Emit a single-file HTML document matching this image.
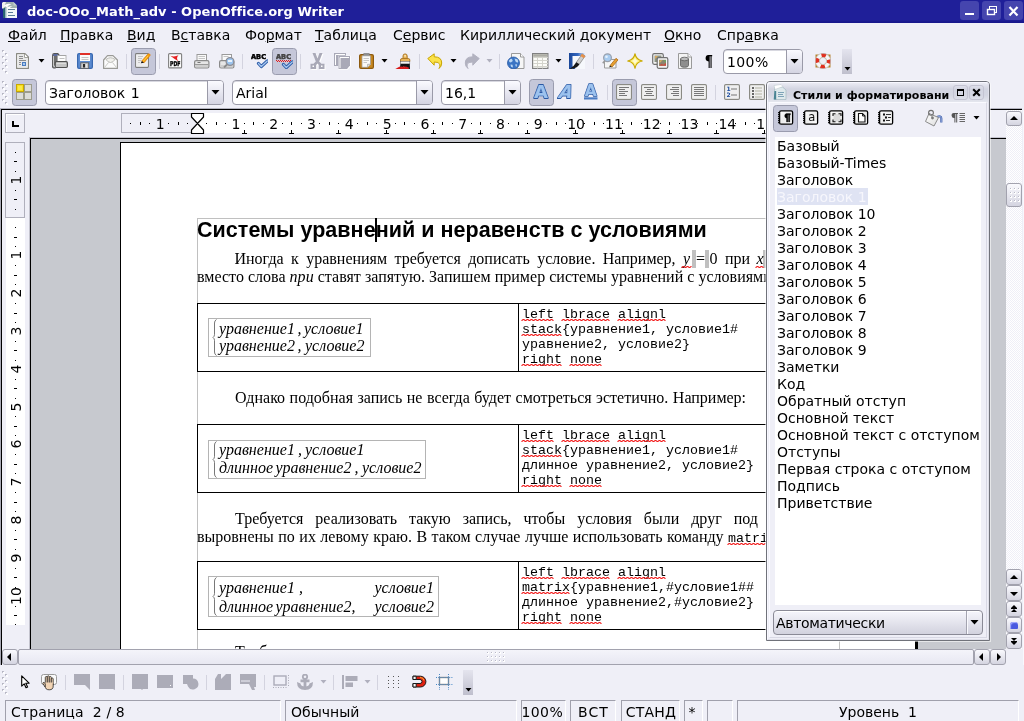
<!DOCTYPE html>
<html lang="ru"><head><meta charset="utf-8"><title>doc-OOo_Math_adv - OpenOffice.org Writer</title>
<style>
html,body{margin:0;padding:0;}
body{width:1024px;height:721px;overflow:hidden;background:#efeff7;font-family:"DejaVu Sans","Liberation Sans",sans-serif;font-size:14px;color:#000;}
#app{will-change:transform;position:relative;width:1024px;height:721px;overflow:hidden;background:#efeff7;}
.a{position:absolute;}
.t{position:absolute;white-space:pre;line-height:1;}
#titlebar{left:0;top:0;width:1024px;height:23px;background:linear-gradient(#1f1f99 0,#1f1f99 20px,#17178c 22px,#17178c 23px);}
#titlebar .ttl{left:27px;top:5px;font-weight:bold;font-size:13px;color:#fff;letter-spacing:0.03px;}
.menu{top:28px;font-size:14px;}
.menu u{text-decoration:underline;text-decoration-thickness:1px;text-underline-offset:1px;}
.sep{position:absolute;width:1px;background:#d3d3df;}
.tog{position:absolute;background:#c5c7d9;border:1px solid #9a9cae;border-radius:3.5px;box-sizing:border-box;}
.combo{position:absolute;box-sizing:border-box;border:1px solid #9a9aa8;border-radius:4px;background:#fff;overflow:hidden;box-shadow:inset 0 1px 0 #d8d8e0;}
.combo .btn{position:absolute;right:0;top:0;bottom:0;width:15px;border-left:1px solid #9a9aa8;background:linear-gradient(#fafaff,#d4d4e2);}
.combo .btn:after{content:"";position:absolute;left:3px;top:9px;width:9px;height:5px;background:#000;clip-path:polygon(.5px 0,8.5px 0,4.5px 4.6px);}
.combo .tx{position:absolute;left:3px;top:4px;font-size:14px;line-height:16px;white-space:pre;}
.dd{position:absolute;width:7px;height:4px;background:#000;clip-path:polygon(.5px 0,6.5px 0,3.5px 3.4px);}
.dd.g{background:#b0b0be;}.dds{position:absolute;width:7px;height:4px;background:#000;clip-path:polygon(.5px 0,6.5px 0,3.5px 3.4px);}
.grip{position:absolute;width:4px;background:repeating-linear-gradient(#efeff7 0 1px,#c4c4d2 1px 2px,#fff 2px 3px, #efeff7 3px 4px);}
#hr i,#vr i{position:absolute;background:#000;display:block;}
#hr b{position:absolute;top:117px;width:30px;text-align:center;font-weight:normal;font-size:14px;line-height:1;}
#vr b.v{position:absolute;left:1px;width:30px;height:30px;line-height:30px;text-align:center;font-weight:normal;font-size:14px;transform:rotate(-90deg);}
.sb{position:absolute;box-sizing:border-box;border:1px solid #a2a2ae;border-radius:3px;background:linear-gradient(#fafafe,#d4d4e0);}
.sf{position:absolute;top:700px;height:21px;box-sizing:border-box;border-top:1px solid #a0a0ac;border-left:1px solid #a0a0ac;border-right:1px solid #fff;}
.gd{position:absolute;width:1px;height:1px;background:#b4b4c2;box-shadow:1px 0 #bcbcc8,0 1px #c0c0cc,1px 1px #fff,2px 1px #fbfbff,1px 2px #fbfbff,2px 2px #fff;}
</style></head><body><div id="app">
<div id="titlebar" class="a">
<svg class="a" style="left:2px;top:2px" width="16" height="16" viewBox="0 0 16 16"><path d="M1 0h10.500L15 3.500V16H1z" fill="#9fb0b0"/><path d="M1 6h14v10H1z" fill="#f4f7f8"/><path d="M1 6h2.500v10H1z" fill="#2a6472"/><path d="M3.500 6h1v10h-1z" fill="#9cbcc4"/><path d="M0 1l1-1h3L1.500 6.500H0z" fill="#f0f0ec"/><path d="M2 3.500Q5 1 9.500 2.200 6 3 5 5.500 3.500 4 2 5z" fill="#fff"/><path d="M4 6Q7 3.500 10.500 4.500 8 5 7.500 6.500z" fill="#fff"/><path d="M11.500 0v3.500H15z" fill="#c4d0d0"/><path d="M6 7.500h7M6 10.500h5M6 13.500h7" stroke="#5a7c98" stroke-width="1"/></svg>
<div class="t ttl">doc-OOo_Math_adv - OpenOffice.org Writer</div>
<div class="a" style="left:960px;top:1px;width:19px;height:19px;background:#4545ae;border-radius:3px"><div class="a" style="left:5px;top:12px;width:9px;height:2px;background:#fff"></div></div>
<div class="a" style="left:982px;top:1px;width:19px;height:19px;background:#4545ae;border-radius:3px"><svg class="a" style="left:0;top:0" width="19" height="19"><rect x="7.5" y="5.5" width="7" height="6" fill="none" stroke="#fff" stroke-width="1"/><rect x="5.5" y="8.5" width="7" height="5" fill="#4545ae" stroke="#fff" stroke-width="1.4"/></svg></div>
<div class="a" style="left:1004px;top:1px;width:19px;height:19px;background:#4545ae;border-radius:3px"><svg class="a" style="left:0;top:0" width="19" height="19"><path d="M5.5 6l8 8.5M13.5 6l-8 8.5" stroke="#fff" stroke-width="2.2" fill="none"/></svg></div>
</div>
<div class="t menu" style="left:8px"><u>Ф</u>айл</div>
<div class="t menu" style="left:60px"><u>П</u>равка</div>
<div class="t menu" style="left:127px"><u>В</u>ид</div>
<div class="t menu" style="left:171px">В<u>с</u>тавка</div>
<div class="t menu" style="left:245px">Фо<u>р</u>мат</div>
<div class="t menu" style="left:315px"><u>Т</u>аблица</div>
<div class="t menu" style="left:393px">С<u>е</u>рвис</div>
<div class="t menu" style="left:460px">Кириллический документ</div>
<div class="t menu" style="left:664px"><u>О</u>кно</div>
<div class="t menu" style="left:717px">Спр<u>а</u>вка</div>
<div class="gd" style="left:2px;top:50px"></div><div class="gd" style="left:5px;top:53px"></div><div class="gd" style="left:2px;top:56px"></div><div class="gd" style="left:5px;top:59px"></div><div class="gd" style="left:2px;top:62px"></div><div class="gd" style="left:5px;top:65px"></div><div class="gd" style="left:2px;top:68px"></div><div class="gd" style="left:5px;top:71px"></div>
<div class="sep" style="left:126px;top:54px;height:15px"></div><div class="sep" style="left:159px;top:54px;height:15px"></div><div class="sep" style="left:242px;top:54px;height:15px"></div><div class="sep" style="left:300px;top:54px;height:15px"></div><div class="sep" style="left:419px;top:54px;height:15px"></div><div class="sep" style="left:499px;top:54px;height:15px"></div><div class="sep" style="left:593px;top:54px;height:15px"></div>
<div class="tog" style="left:131px;top:48px;width:25px;height:27px"></div><div class="tog" style="left:272px;top:48px;width:25px;height:27px"></div>
<div class="dd" style="left:38px;top:59px"></div><div class="dd" style="left:381px;top:59px"></div><div class="dd" style="left:450px;top:59px"></div><div class="dd g" style="left:486px;top:59px"></div><div class="dd" style="left:555px;top:59px"></div>
<svg class="a" style="left:16px;top:53px" width="13" height="16" viewBox="0 0 13 16"><path d="M.6.6h8.400l3.400 3.400v11.400H.6z" fill="#fff" stroke="#8a8a82" stroke-width="1.200" stroke-linejoin="round"/><path d="M2 2h6.500l2.500 3v9H2z" fill="#e9e9e9"/><path d="M8.500 1v3.500H12" fill="#fff" stroke="#9a9a92" stroke-width=".9"/><path d="M3 3.500h4M3 5.500h4M3 7.500h7M3 9.500h2M3 11.500h2" stroke="#8c8c8c"/><rect x="6.500" y="9.500" width="3" height="3" fill="#a8c8ec" stroke="#4a7cc0"/></svg>
<svg class="a" style="left:52px;top:53px" width="17" height="16" viewBox="0 0 17 16"><path d="M.7 13.500V2.200q0-1.500 1.500-1.500h3.600l1.500 1.800H13v5" fill="#6e6e6e" stroke="#555" stroke-width="1.200"/><path d="M1.300 1.300h4.200l1.200 1.500H1.300z" fill="#5a6eb0"/><path d="M1.500 3v10" stroke="#c8c8c8"/><rect x="5.500" y="2.500" width="8.500" height="6.500" fill="#fdfdfd" stroke="#a4a4a4" stroke-width=".8"/><path d="M7.500 5.500h5" stroke="#c0c0c0"/><rect x="3.200" y="8.700" width="12.200" height="5.800" rx="1.200" fill="#c4c4c4" stroke="#505050" stroke-width="1.200"/><path d="M4.500 10.200h9.500" stroke="#e8e8e8"/><path d="M.7 13v1q0 .8 1 .8h2" fill="none" stroke="#505050" stroke-width="1.200"/></svg>
<svg class="a" style="left:77px;top:53px" width="17" height="16" viewBox="0 0 17 16"><rect x=".6" y=".6" width="14.800" height="14.800" rx="1.500" fill="#5a8ad0" stroke="#3868b0" stroke-width="1.200"/><rect x="3" y="0" width="10" height="8" fill="#fafafa"/><rect x="3" y="0" width="10" height="2" fill="#e03028"/><path d="M4.500 4.500h7M4.500 6.500h7" stroke="#c4c4c4"/><rect x="3.800" y="9.800" width="7.900" height="5.700" fill="#c8c8c8" stroke="#5a5a5a" stroke-width=".8"/><rect x="6" y="11" width="2" height="3.500" fill="#2a2a2a"/><rect x="9" y="11" width="1" height="3.500" fill="#e8e8e8"/></svg>
<svg class="a" style="left:103px;top:55px" width="15" height="14" viewBox="0 0 15 14"><path d="M.6 5L4.500.6h5.500L14.400 5v8.400H.6z" fill="#fbfbfb" stroke="#9a9a96" stroke-width="1.200" stroke-linejoin="round"/><path d="M3 4.500Q7.500 1 12 4.500 10 7.500 7.500 7.500T3 4.500z" fill="#f0f0ec" stroke="#b4b4b0" stroke-width=".9"/><path d="M1.500 12.500L5.500 7.500M13.500 12.500L9.500 7.500" stroke="#c4c4c0" stroke-width=".9"/></svg>
<svg class="a" style="left:135px;top:52px" width="16" height="16" viewBox="0 0 16 16"><rect x=".6" y="1.600" width="12.800" height="13.800" rx=".8" fill="#fdfdfd" stroke="#7e7e7e" stroke-width="1.100"/><rect x="2" y="3" width="10" height="11" fill="#ededed"/><path d="M3 4.500h5M3 6.500h4M3 8.500h3M3 10.500h2" stroke="#c4c4c4"/><path d="M6.800 9L12.800 2.200q1.600-1 2.500.8L9 10.800z" fill="#f8a808" stroke="#e07808" stroke-width=".8"/><path d="M8 9.500l5-5.500" stroke="#fcd050" stroke-width=".9"/><path d="M5.800 11.200l1-2.200 2.200 1.800z" fill="#111"/></svg>
<svg class="a" style="left:168px;top:53px" width="15" height="16" viewBox="0 0 15 16"><rect x=".6" y=".6" width="13" height="14.300" rx="1" fill="#fcfcfc" stroke="#808080" stroke-width="1.100"/><path d="M2.300 2.800Q6 5.800 10.500 8.300 7.500 5.300 10.500 2.300 6.500 4.300 2.300 2.800z" fill="#e62020"/><text x="2" y="13.400" font-family="DejaVu Sans,sans-serif" font-weight="bold" font-size="6.600" textLength="10.400" lengthAdjust="spacingAndGlyphs" fill="#000" stroke="#000" stroke-width=".4">PDF</text></svg>
<svg class="a" style="left:194px;top:54px" width="16" height="15" viewBox="0 0 16 15"><rect x="3" y=".5" width="9.500" height="7" fill="#fafafa" stroke="#9a9a9a"/><path d="M4.500 2.500h6.500M4.500 4.500h6.500" stroke="#c4c4c4"/><rect x=".6" y="6.600" width="14.300" height="7.300" rx="1.500" fill="#e6e6e6" stroke="#8a8a8a" stroke-width="1.200"/><path d="M1 10.500h13.500" stroke="#9a9a9a"/><rect x="1.500" y="11" width="12.500" height="2.500" fill="#cfcfcf"/><path d="M3.500 8.500h3" stroke="#777"/></svg>
<svg class="a" style="left:219px;top:54px" width="16" height="15" viewBox="0 0 16 15"><rect x="3" y=".5" width="9.500" height="7" fill="#fafafa" stroke="#9a9a9a"/><path d="M4.500 2.500h5" stroke="#c4c4c4"/><rect x=".6" y="6.600" width="14.300" height="7.300" rx="1.500" fill="#e6e6e6" stroke="#8a8a8a" stroke-width="1.200"/><rect x="1.500" y="11" width="12.500" height="2.500" fill="#cfcfcf"/><circle cx="11" cy="7.500" r="3.900" fill="#9cc4ee" stroke="#8c8c94" stroke-width="1.300"/><rect x="9" y="6" width="4" height="2" fill="#e8f2fc"/><path d="M8 10.500l-3 3" stroke="#8a8a8a" stroke-width="1.800"/></svg>
<svg class="a" style="left:251px;top:54px" width="17" height="15" viewBox="0 0 17 15"><text x="0" y="5" font-family="DejaVu Sans,sans-serif" font-weight="bold" font-size="6.800" stroke-width=".5" stroke="#000" textLength="15" lengthAdjust="spacingAndGlyphs" fill="#000">ABC</text><path d="M7.5 9.5l2.800 3 6-5.500" fill="none" stroke="#2c5ca8" stroke-width="3.200" stroke-linecap="round" stroke-linejoin="round"/><path d="M7.5 9.5l2.800 3 6-5.500" fill="none" stroke="#a8c8f0" stroke-width="1.200" stroke-linecap="round" stroke-linejoin="round"/></svg>
<svg class="a" style="left:276px;top:54px" width="17" height="15" viewBox="0 0 17 15"><text x="0" y="5" font-family="DejaVu Sans,sans-serif" font-weight="bold" font-size="6.800" stroke-width=".5" stroke="#444" textLength="15" lengthAdjust="spacingAndGlyphs" fill="#444">ABC</text><rect x="0" y="6" width="1" height="1" fill="#e81818"/><rect x="1" y="7" width="1" height="1" fill="#e81818"/><rect x="2" y="6" width="1" height="1" fill="#e81818"/><rect x="3" y="7" width="1" height="1" fill="#e81818"/><rect x="4" y="6" width="1" height="1" fill="#e81818"/><rect x="5" y="7" width="1" height="1" fill="#e81818"/><rect x="6" y="6" width="1" height="1" fill="#e81818"/><rect x="7" y="7" width="1" height="1" fill="#e81818"/><rect x="8" y="6" width="1" height="1" fill="#e81818"/><rect x="9" y="7" width="1" height="1" fill="#e81818"/><rect x="10" y="6" width="1" height="1" fill="#e81818"/><rect x="11" y="7" width="1" height="1" fill="#e81818"/><rect x="12" y="6" width="1" height="1" fill="#e81818"/><rect x="13" y="7" width="1" height="1" fill="#e81818"/><rect x="14" y="6" width="1" height="1" fill="#e81818"/><path d="M7.5 10.5l2.800 3 6-5.500" fill="none" stroke="#2c5ca8" stroke-width="3.200" stroke-linecap="round" stroke-linejoin="round"/><path d="M7.5 10.5l2.800 3 6-5.500" fill="none" stroke="#a8c8f0" stroke-width="1.200" stroke-linecap="round" stroke-linejoin="round"/></svg>
<svg class="a" style="left:310px;top:53px" width="16" height="17" viewBox="0 0 16 17"><g transform="translate(1 1)"><path d="M2.500 0h3l2 5.500 2-5.500h3L9.200 8.500l2.300 2.200h3V16H8.800v-4L7.500 10.500 6.200 12v4H.5v-5.300h3L5.800 8.500z" fill="#fff"/></g><path d="M2.500 0h3l2 5.500 2-5.500h3L9.200 8.500l2.300 2.200h3V16H8.800v-4L7.500 10.500 6.200 12v4H.5v-5.300h3L5.800 8.500z" fill="#a9a9b7"/><rect x="2.500" y="12.500" width="1.500" height="1.500" fill="#fff"/><rect x="11" y="12.500" width="1.500" height="1.500" fill="#fff"/></svg>
<svg class="a" style="left:334px;top:53px" width="17" height="17" viewBox="0 0 17 17"><rect x="0" y="0" width="12" height="13" fill="#a9a9b7"/><path d="M1.500 12V1.500H11" fill="none" stroke="#fff" stroke-width="1"/><path d="M4.300 2.800H16.800V13l-3 3.800H4.300z" fill="#fff"/><path d="M4.500 3h11.500v9.500L13 16H4.500z" fill="#a9a9b7"/><path d="M6 15V4.500h9" fill="none" stroke="#fff" stroke-width="1"/></svg>
<svg class="a" style="left:359px;top:53px" width="15" height="16" viewBox="0 0 15 16"><rect x=".6" y="1.600" width="13.800" height="13.800" rx="1.500" fill="#c88820" stroke="#8c5a10" stroke-width="1.200"/><rect x="4.500" y=".2" width="6" height="2.800" rx="1" fill="#8e8e8e" stroke="#6a6a6a" stroke-width=".5"/><path d="M3 2.800h8.500v8.500l-3 3H3z" fill="#fafaf8" stroke="#9a9a9a" stroke-width=".7"/><path d="M11.500 11.300h-3v3" fill="#e0e0dc" stroke="#9a9a9a" stroke-width=".6"/><path d="M4.500 5.500h5.500M4.500 7.500h5.500M4.500 9.500h3.500" stroke="#c8c8c8"/></svg>
<svg class="a" style="left:395px;top:53px" width="17" height="16" viewBox="0 0 17 16"><path d="M8 5.500V3a2.100 2.100 0 1 1 4.200 0V5.500z" fill="#e8b458" stroke="#a87420" stroke-width=".9"/><circle cx="10.100" cy="2.800" r=".9" fill="#fff0c8"/><path d="M5.500 8.500V7q0-1.500 1.500-1.500h6.300q1.500 0 1.500 1.500v1.500z" fill="#e8b458" stroke="#a87420" stroke-width=".9"/><rect x="5.500" y="8.300" width="9.300" height="2.700" fill="#d8d8d4" stroke="#555" stroke-width=".5"/><rect x="6" y="8.800" width="8.300" height="1" fill="#fafafa"/><path d="M5.500 11h9.300l.2 5H4.500z" fill="#141414"/><path d="M.3 16l4-2.300h6l3.500.8V16z" fill="#d81818"/><path d="M6 13.500l1 1M8.500 13l1 1.500M11 13.500l1 1" stroke="#e84040" stroke-width=".8"/></svg>
<svg class="a" style="left:427px;top:53px" width="16" height="16" viewBox="0 0 16 16"><path d="M.8 5.500L7.200.8v3q7.500 0 7.500 6.200 0 3.500-2.700 5.500 1.400-2.200.8-4.200-.9-2.500-5.600-2.300v3.200z" fill="#fbe24a" stroke="#c8a400" stroke-width="1" stroke-linejoin="round"/></svg>
<svg class="a" style="left:464px;top:53px" width="16" height="16" viewBox="0 0 16 16"><path d="M15.200 5.500L8.800.8v3Q1.300 3.800 1.300 10q0 3.500 2.700 5.500-1.400-2.200-.8-4.200.9-2.500 5.600-2.300v3.200z" fill="#b2b2c0" stroke="#b2b2c0" stroke-width="1" stroke-linejoin="round"/></svg>
<svg class="a" style="left:507px;top:53px" width="18" height="16" viewBox="0 0 18 16"><path d="M4.500.5h9l3.500 3.500v11.500H4.500z" fill="#f6f6f6" stroke="#9a9a9a"/><path d="M13.500.5v3.500H17" fill="#fff" stroke="#9a9a9a"/><circle cx="6.500" cy="10" r="6" fill="#3a74c4" stroke="#2a5aa4" stroke-width=".8"/><path d="M2 7.500q1.500-2.500 3-1.500l.8 2-2 1.500-1.500-.5zM7.500 5.500l3 .8.800 2.500-1 1-1.800-1.300zM3.500 11.500l2 .3.500 2.700-2-.8zM8.500 11l1.500.5-.5 2.500-1-1z" fill="#bcd8f4"/></svg>
<svg class="a" style="left:532px;top:53px" width="17" height="16" viewBox="0 0 17 16"><rect x=".6" y=".6" width="15.300" height="14.800" fill="#fcfcf8" stroke="#808080" stroke-width="1.200"/><rect x="1.200" y="1.200" width="14.100" height="2.600" fill="#acaca4"/><path d="M1 4.500h15M1 7.500h15M1 10.500h15M1 13.500h15M5.500 4v11.500M10.500 4v11.500" stroke="#d4d4cc" stroke-width="1"/></svg>
<svg class="a" style="left:569px;top:53px" width="17" height="16" viewBox="0 0 17 16"><defs><linearGradient id="dg" x1="0" x2="1"><stop offset="0" stop-color="#1a4698"/><stop offset=".55" stop-color="#3468c0"/><stop offset="1" stop-color="#e8eefa"/></linearGradient></defs><rect x="0" y="0" width="16" height="16" fill="url(#dg)"/><path d="M3.500 3H16V16H3.500z" fill="#f6f8fc"/><path d="M3.500 13l3 3H3.500z" fill="#1a4698"/><path d="M13.200 1l3 2-6 8.500-3-2z" fill="#cfcfcf" stroke="#6a6a6a" stroke-width=".6"/><path d="M13 .8l3.300 2.200-1.500 2.200-3.300-2.200z" fill="#e89048"/><path d="M7.300 9.300l3 2q-1.300 4.200-9.800 4.700 4.300-2.200 6.800-6.700z" fill="#161616"/></svg>
<svg class="a" style="left:602px;top:53px" width="17" height="16" viewBox="0 0 17 16"><path d="M2.500 6.500h11.500v8.500H2.500z" fill="#f6f6f6" stroke="#9c9c9c"/><circle cx="5.500" cy="4.700" r="3.900" fill="#a8ccf0" stroke="#9aa0ac" stroke-width="1.200"/><circle cx="4.500" cy="3.700" r="1.300" fill="#e4f0fc"/><path d="M2.800 7.800L.8 10.300" stroke="#9a9a9a" stroke-width="1.600"/><path d="M8 12.500l6-7.200 2 1.600-6 7.200z" fill="#e8a030" stroke="#a86410" stroke-width=".7"/><path d="M7.200 14.300l.8-1.900 1.900 1.400z" fill="#222"/></svg>
<svg class="a" style="left:627px;top:53px" width="16" height="16" viewBox="0 0 16 16"><path d="M8 .7Q9 6.800 15.300 8 9 9.200 8 15.300 7 9.200 .7 8 7 6.800 8 .7z" fill="#fdf07a" stroke="#c8a800" stroke-width="1.100" stroke-linejoin="round"/><path d="M8 4Q8.500 7.300 11.500 8 8.500 8.700 8 12 7.500 8.700 4.500 8 7.500 7.300 8 4z" fill="#fffbd0"/></svg>
<svg class="a" style="left:652px;top:53px" width="17" height="16" viewBox="0 0 17 16"><rect x=".7" y=".7" width="10.600" height="10.600" rx="1.500" fill="#f4f4f4" stroke="#707070" stroke-width="1.200"/><rect x="2.500" y="2.500" width="7" height="6.500" fill="#8c9484"/><path d="M3 3h3l-3 3z" fill="#d8a860"/><rect x="5.200" y="4.700" width="10.600" height="10.600" rx="1.500" fill="#f4f4f4" stroke="#707070" stroke-width="1.200"/><rect x="7" y="6.800" width="7" height="6" fill="#8c8470"/><path d="M7 12.800l2.500-2 2 1 2.500-2v3z" fill="#c85040"/><path d="M7.500 7.300h3l-3 3z" fill="#d8b060"/><path d="M11 7.300h3v3z" fill="#70a060"/></svg>
<svg class="a" style="left:678px;top:53px" width="14" height="16" viewBox="0 0 14 16"><path d="M.5.500h9.500l3.500 3.500v11.500H.5z" fill="#f4f4f4" stroke="#9a9a9a"/><path d="M10 .5v3.500h3.500" fill="#fff" stroke="#9a9a9a"/><path d="M2.500 6v6.500a4 1.800 0 0 0 8 0V6z" fill="#8e8e8e" stroke="#5a5a5a" stroke-width=".8"/><ellipse cx="6.500" cy="6" rx="4" ry="1.800" fill="#bcbcbc" stroke="#5a5a5a" stroke-width=".8"/></svg>
<svg class="a" style="left:705px;top:55px" width="9" height="14" viewBox="0 0 9 14"><path d="M4 0H7.200v1.200H6.600V13H5.500V1.200H4.700V13H3.600V6.400A3.200 3.200 0 0 1 4 0z" fill="#000"/></svg>
<div class="combo" style="left:723px;top:49px;width:80px;height:25px"><div class="tx" style="top:4px;letter-spacing:.4px">100%</div><div class="btn"></div></div>
<svg class="a" style="left:815px;top:53px" width="16" height="16" viewBox="0 0 16 16"><rect x=".5" y="1.500" width="15" height="13" fill="#b07818" opacity=".9"/><circle cx="8" cy="8" r="5.700" fill="none" stroke="#f6f6f6" stroke-width="4"/><circle cx="8" cy="8" r="5.700" fill="none" stroke="#e03020" stroke-width="4" stroke-dasharray="4.480 4.480" stroke-dashoffset="2.240"/><circle cx="8" cy="8" r="7.700" fill="none" stroke="#bcbcbc" stroke-width=".7"/><circle cx="8" cy="8" r="3.600" fill="#efeff7" stroke="#bcbcbc" stroke-width=".7"/></svg>
<div class="a" style="left:842px;top:49px;width:10px;height:25px;background:linear-gradient(#e4e4ee,#bfbfcd)"><div class="dds" style="left:2px;top:18px"></div></div>
<div class="gd" style="left:2px;top:81px"></div><div class="gd" style="left:5px;top:84px"></div><div class="gd" style="left:2px;top:87px"></div><div class="gd" style="left:5px;top:90px"></div><div class="gd" style="left:2px;top:93px"></div><div class="gd" style="left:5px;top:96px"></div><div class="gd" style="left:2px;top:99px"></div><div class="gd" style="left:5px;top:102px"></div>
<div class="tog" style="left:12px;top:79px;width:25px;height:27px"></div><div class="tog" style="left:529px;top:79px;width:25px;height:27px"></div><div class="tog" style="left:612px;top:79px;width:25px;height:27px"></div>
<div class="sep" style="left:607px;top:85px;height:15px"></div><div class="sep" style="left:715px;top:85px;height:15px"></div>
<svg class="a" style="left:16px;top:84px" width="16" height="16" viewBox="0 0 16 16"><rect x=".5" y=".5" width="7" height="7" fill="#f8e020" stroke="#c8a800"/><rect x="8.500" y=".5" width="7" height="7" fill="#dcdcd8" stroke="#9c9c8c"/><rect x=".5" y="8.500" width="7" height="7" fill="#dcdcd8" stroke="#9c9c8c"/><rect x="8.500" y="8.500" width="7" height="7" fill="#dcdcd8" stroke="#9c9c8c"/><rect x="2" y="2" width="4" height="4" fill="#fbe94a"/></svg>
<div class="combo" style="left:45px;top:80px;width:179px;height:25px"><div class="tx" style="word-spacing:1px">Заголовок 1</div><div class="btn"></div></div>
<div class="combo" style="left:232px;top:80px;width:201px;height:25px"><div class="tx">Arial</div><div class="btn"></div></div>
<div class="combo" style="left:441px;top:80px;width:80px;height:25px"><div class="tx">16,1</div><div class="btn"></div></div>
<svg class="a" style="left:532px;top:84px" width="18" height="16" viewBox="0 0 18 16"><text x="9" y="13.600" font-family="DejaVu Sans,sans-serif" font-weight="bold" font-size="18" text-anchor="middle" fill="#2a58a4" stroke="#2a58a4" stroke-width="1.800" stroke-linejoin="round" >A</text><text x="9" y="13.600" font-family="DejaVu Sans,sans-serif" font-weight="bold" font-size="18" text-anchor="middle" fill="#9cc2ee" stroke="#9cc2ee" stroke-width=".2" >A</text></svg>
<svg class="a" style="left:557px;top:84px" width="18" height="16" viewBox="0 0 18 16"><text x="7.5" y="13.600" font-family="DejaVu Sans,sans-serif" font-weight="bold" font-size="18" text-anchor="middle" fill="#2a58a4" stroke="#2a58a4" stroke-width="1.800" stroke-linejoin="round" transform="skewX(-20) translate(5 0) scale(.92 1)">A</text><text x="7.5" y="13.600" font-family="DejaVu Sans,sans-serif" font-weight="bold" font-size="18" text-anchor="middle" fill="#9cc2ee" stroke="#9cc2ee" stroke-width=".2" transform="skewX(-20) translate(5 0) scale(.92 1)">A</text></svg>
<svg class="a" style="left:582px;top:83px" width="18" height="17" viewBox="0 0 18 17"><g transform="scale(.86 .9) translate(1.300 .5)"><text x="9" y="13.600" font-family="DejaVu Sans,sans-serif" font-weight="bold" font-size="18" text-anchor="middle" fill="#2a58a4" stroke="#2a58a4" stroke-width="1.800" stroke-linejoin="round" >A</text><text x="9" y="13.600" font-family="DejaVu Sans,sans-serif" font-weight="bold" font-size="18" text-anchor="middle" fill="#9cc2ee" stroke="#9cc2ee" stroke-width=".2" >A</text></g><rect x="2" y="14.300" width="13.500" height="2.200" fill="#4a7cc4"/></svg>
<svg class="a" style="left:616px;top:84px" width="16" height="16" viewBox="0 0 16 16"><rect x=".6" y=".6" width="14.800" height="14.800" rx="1.200" fill="#fff" stroke="#8a8a84" stroke-width="1.200"/><rect x="2" y="2" width="12" height="12" fill="#efefef"/><rect x="3" y="3" width="10" height="1" fill="#777"/><rect x="3" y="5" width="6" height="1" fill="#777"/><rect x="3" y="7" width="9" height="1" fill="#777"/><rect x="3" y="9" width="6" height="1" fill="#777"/><rect x="3" y="11" width="8" height="1" fill="#777"/></svg>
<svg class="a" style="left:641px;top:84px" width="16" height="16" viewBox="0 0 16 16"><rect x=".6" y=".6" width="14.800" height="14.800" rx="1.200" fill="#fff" stroke="#8a8a84" stroke-width="1.200"/><rect x="2" y="2" width="12" height="12" fill="#efefef"/><rect x="3" y="3" width="10" height="1" fill="#777"/><rect x="6" y="5" width="4" height="1" fill="#777"/><rect x="4" y="7" width="8" height="1" fill="#777"/><rect x="5" y="9" width="6" height="1" fill="#777"/><rect x="3" y="11" width="10" height="1" fill="#777"/></svg>
<svg class="a" style="left:666px;top:84px" width="16" height="16" viewBox="0 0 16 16"><rect x=".6" y=".6" width="14.800" height="14.800" rx="1.200" fill="#fff" stroke="#8a8a84" stroke-width="1.200"/><rect x="2" y="2" width="12" height="12" fill="#efefef"/><rect x="6" y="3" width="7" height="1" fill="#777"/><rect x="4" y="5" width="9" height="1" fill="#777"/><rect x="7" y="7" width="6" height="1" fill="#777"/><rect x="5" y="9" width="8" height="1" fill="#777"/><rect x="7" y="11" width="6" height="1" fill="#777"/></svg>
<svg class="a" style="left:691px;top:84px" width="16" height="16" viewBox="0 0 16 16"><rect x=".6" y=".6" width="14.800" height="14.800" rx="1.200" fill="#fff" stroke="#8a8a84" stroke-width="1.200"/><rect x="2" y="2" width="12" height="12" fill="#efefef"/><rect x="3" y="3" width="10" height="1" fill="#777"/><rect x="3" y="5" width="10" height="1" fill="#777"/><rect x="3" y="7" width="10" height="1" fill="#777"/><rect x="3" y="9" width="10" height="1" fill="#777"/><rect x="3" y="11" width="10" height="1" fill="#777"/></svg>
<svg class="a" style="left:724px;top:84px" width="16" height="16" viewBox="0 0 16 16"><rect x=".6" y=".6" width="14.800" height="14.800" rx="1.200" fill="#fafafa" stroke="#8a8a84" stroke-width="1.200"/><rect x="2" y="2" width="12" height="12" fill="#efefef"/><text x="2.500" y="7.400" font-family="DejaVu Sans,sans-serif" font-weight="bold" font-size="6" fill="#1c4ca0">1</text><text x="2.500" y="13.400" font-family="DejaVu Sans,sans-serif" font-weight="bold" font-size="6" fill="#1c4ca0">2</text><rect x="7" y="4.500" width="6" height="1" fill="#777"/><rect x="7" y="10.500" width="6" height="1" fill="#777"/></svg>
<svg class="a" style="left:749px;top:84px" width="16" height="16" viewBox="0 0 16 16"><rect x=".6" y=".6" width="14.800" height="14.800" rx="1.200" fill="#fafafa" stroke="#8a8a84" stroke-width="1.200"/><rect x="2" y="2" width="12" height="12" fill="#efefef"/><rect x="3" y="3" width="2" height="2" fill="#666"/><rect x="6" y="3.5" width="7" height="1" fill="#b4b4a4"/><rect x="3" y="6" width="2" height="2" fill="#666"/><rect x="6" y="6.5" width="7" height="1" fill="#b4b4a4"/><rect x="3" y="9" width="2" height="2" fill="#666"/><rect x="6" y="9.5" width="7" height="1" fill="#b4b4a4"/><rect x="3" y="12" width="2" height="2" fill="#666"/><rect x="6" y="12.5" width="7" height="1" fill="#b4b4a4"/></svg>
<div class="a" style="left:0;top:108px;width:1022px;height:1px;background:#b4b4c0"></div><div class="a" style="left:0;top:109px;width:1px;height:556px;background:#a9a9b5"></div><div class="a" style="left:1px;top:109px;width:1021px;height:1px;background:#000"></div><div class="a" style="left:1px;top:109px;width:1px;height:556px;background:#000"></div>
<div class="a" style="left:5px;top:113px;width:20px;height:20px;box-sizing:border-box;border:1px solid #b0b0bc;box-shadow:inset 1px 1px 0 #fff"><div class="a" style="left:6px;top:7px;width:2px;height:6px;background:#000"></div><div class="a" style="left:6px;top:11px;width:7px;height:2px;background:#000"></div></div>
<div class="a" style="left:197px;top:113px;width:643px;height:20px;background:#fff"></div><div class="a" style="left:121px;top:113px;width:77px;height:20px;box-sizing:border-box;border:1px solid #b0b0bc;border-right:0;background:#efeff7"></div>
<div id="hr" class="a" style="left:0;top:0"><i style="left:130px;top:123px;width:1px;height:1px"></i><i style="left:140px;top:122px;width:1px;height:3px"></i><i style="left:149px;top:123px;width:1px;height:1px"></i><b style="left:145.3px">1</b><i style="left:168px;top:123px;width:1px;height:1px"></i><i style="left:178px;top:122px;width:1px;height:3px"></i><i style="left:187px;top:123px;width:1px;height:1px"></i><i style="left:206px;top:123px;width:1px;height:1px"></i><i style="left:216px;top:122px;width:1px;height:3px"></i><i style="left:225px;top:123px;width:1px;height:1px"></i><b style="left:220.9px">1</b><i style="left:244px;top:123px;width:1px;height:1px"></i><i style="left:253px;top:122px;width:1px;height:3px"></i><i style="left:263px;top:123px;width:1px;height:1px"></i><b style="left:258.7px">2</b><i style="left:282px;top:123px;width:1px;height:1px"></i><i style="left:291px;top:122px;width:1px;height:3px"></i><i style="left:301px;top:123px;width:1px;height:1px"></i><b style="left:296.5px">3</b><i style="left:319px;top:123px;width:1px;height:1px"></i><i style="left:329px;top:122px;width:1px;height:3px"></i><i style="left:338px;top:123px;width:1px;height:1px"></i><b style="left:334.3px">4</b><i style="left:357px;top:123px;width:1px;height:1px"></i><i style="left:367px;top:122px;width:1px;height:3px"></i><i style="left:376px;top:123px;width:1px;height:1px"></i><b style="left:372.1px">5</b><i style="left:395px;top:123px;width:1px;height:1px"></i><i style="left:404px;top:122px;width:1px;height:3px"></i><i style="left:414px;top:123px;width:1px;height:1px"></i><b style="left:409.9px">6</b><i style="left:433px;top:123px;width:1px;height:1px"></i><i style="left:442px;top:122px;width:1px;height:3px"></i><i style="left:452px;top:123px;width:1px;height:1px"></i><b style="left:447.7px">7</b><i style="left:471px;top:123px;width:1px;height:1px"></i><i style="left:480px;top:122px;width:1px;height:3px"></i><i style="left:490px;top:123px;width:1px;height:1px"></i><b style="left:485.5px">8</b><i style="left:508px;top:123px;width:1px;height:1px"></i><i style="left:518px;top:122px;width:1px;height:3px"></i><i style="left:527px;top:123px;width:1px;height:1px"></i><b style="left:523.3px">9</b><i style="left:546px;top:123px;width:1px;height:1px"></i><i style="left:556px;top:122px;width:1px;height:3px"></i><i style="left:565px;top:123px;width:1px;height:1px"></i><b style="left:561.1px">10</b><i style="left:584px;top:123px;width:1px;height:1px"></i><i style="left:594px;top:122px;width:1px;height:3px"></i><i style="left:603px;top:123px;width:1px;height:1px"></i><b style="left:598.9px">11</b><i style="left:622px;top:123px;width:1px;height:1px"></i><i style="left:631px;top:122px;width:1px;height:3px"></i><i style="left:641px;top:123px;width:1px;height:1px"></i><b style="left:636.7px">12</b><i style="left:660px;top:123px;width:1px;height:1px"></i><i style="left:669px;top:122px;width:1px;height:3px"></i><i style="left:679px;top:123px;width:1px;height:1px"></i><b style="left:674.5px">13</b><i style="left:697px;top:123px;width:1px;height:1px"></i><i style="left:707px;top:122px;width:1px;height:3px"></i><i style="left:716px;top:123px;width:1px;height:1px"></i><b style="left:712.3px">14</b><i style="left:735px;top:123px;width:1px;height:1px"></i><i style="left:745px;top:122px;width:1px;height:3px"></i><i style="left:754px;top:123px;width:1px;height:1px"></i><b style="left:750.1px">15</b><i style="left:244px;top:130px;width:1px;height:3px"></i><i style="left:242px;top:133px;width:5px;height:1px"></i><i style="left:291px;top:130px;width:1px;height:3px"></i><i style="left:289px;top:133px;width:5px;height:1px"></i><i style="left:338px;top:130px;width:1px;height:3px"></i><i style="left:336px;top:133px;width:5px;height:1px"></i><i style="left:386px;top:130px;width:1px;height:3px"></i><i style="left:384px;top:133px;width:5px;height:1px"></i><i style="left:433px;top:130px;width:1px;height:3px"></i><i style="left:431px;top:133px;width:5px;height:1px"></i><i style="left:480px;top:130px;width:1px;height:3px"></i><i style="left:478px;top:133px;width:5px;height:1px"></i><i style="left:527px;top:130px;width:1px;height:3px"></i><i style="left:525px;top:133px;width:5px;height:1px"></i><i style="left:575px;top:130px;width:1px;height:3px"></i><i style="left:573px;top:133px;width:5px;height:1px"></i><i style="left:622px;top:130px;width:1px;height:3px"></i><i style="left:620px;top:133px;width:5px;height:1px"></i><i style="left:669px;top:130px;width:1px;height:3px"></i><i style="left:667px;top:133px;width:5px;height:1px"></i><i style="left:716px;top:130px;width:1px;height:3px"></i><i style="left:714px;top:133px;width:5px;height:1px"></i><i style="left:764px;top:130px;width:1px;height:3px"></i><i style="left:762px;top:133px;width:5px;height:1px"></i></div>
<svg class="a" style="left:190px;top:112px" width="15" height="23" viewBox="0 0 15 23"><path d="M1.500 1.500h12v3.500L7.500 11.500 1.500 5zM1.500 21.500h12v-3.500L7.500 11.500 1.500 18z" fill="#fff" stroke="#000" stroke-width="1.200" stroke-linejoin="round"/></svg>
<div class="a" style="left:6px;top:217px;width:19px;height:408px;background:#fff"></div><div class="a" style="left:5px;top:142px;width:20px;height:76px;box-sizing:border-box;border:1px solid #b0b0bc;background:#efeff7"></div>
<div id="vr" class="a" style="left:0;top:0"><i style="left:15px;top:152px;width:1px;height:1px"></i><i style="left:14px;top:161px;width:3px;height:1px"></i><i style="left:15px;top:171px;width:1px;height:1px"></i><b class="v" style="top:165px">1</b><i style="left:15px;top:190px;width:1px;height:1px"></i><i style="left:14px;top:199px;width:3px;height:1px"></i><i style="left:15px;top:209px;width:1px;height:1px"></i><i style="left:15px;top:227px;width:1px;height:1px"></i><i style="left:14px;top:237px;width:3px;height:1px"></i><i style="left:15px;top:246px;width:1px;height:1px"></i><b class="v" style="top:240px">1</b><i style="left:15px;top:265px;width:1px;height:1px"></i><i style="left:14px;top:275px;width:3px;height:1px"></i><i style="left:15px;top:284px;width:1px;height:1px"></i><b class="v" style="top:278px">2</b><i style="left:15px;top:303px;width:1px;height:1px"></i><i style="left:14px;top:313px;width:3px;height:1px"></i><i style="left:15px;top:322px;width:1px;height:1px"></i><b class="v" style="top:316px">3</b><i style="left:15px;top:341px;width:1px;height:1px"></i><i style="left:14px;top:350px;width:3px;height:1px"></i><i style="left:15px;top:360px;width:1px;height:1px"></i><b class="v" style="top:354px">4</b><i style="left:15px;top:379px;width:1px;height:1px"></i><i style="left:14px;top:388px;width:3px;height:1px"></i><i style="left:15px;top:398px;width:1px;height:1px"></i><b class="v" style="top:392px">5</b><i style="left:15px;top:416px;width:1px;height:1px"></i><i style="left:14px;top:426px;width:3px;height:1px"></i><i style="left:15px;top:435px;width:1px;height:1px"></i><b class="v" style="top:429px">6</b><i style="left:15px;top:454px;width:1px;height:1px"></i><i style="left:14px;top:464px;width:3px;height:1px"></i><i style="left:15px;top:473px;width:1px;height:1px"></i><b class="v" style="top:467px">7</b><i style="left:15px;top:492px;width:1px;height:1px"></i><i style="left:14px;top:502px;width:3px;height:1px"></i><i style="left:15px;top:511px;width:1px;height:1px"></i><b class="v" style="top:505px">8</b><i style="left:15px;top:530px;width:1px;height:1px"></i><i style="left:14px;top:539px;width:3px;height:1px"></i><i style="left:15px;top:549px;width:1px;height:1px"></i><b class="v" style="top:543px">9</b><i style="left:15px;top:568px;width:1px;height:1px"></i><i style="left:14px;top:577px;width:3px;height:1px"></i><i style="left:15px;top:587px;width:1px;height:1px"></i><b class="v" style="top:581px">10</b><i style="left:15px;top:606px;width:1px;height:1px"></i><i style="left:14px;top:615px;width:3px;height:1px"></i><i style="left:15px;top:624px;width:1px;height:1px"></i></div>
<div class="a" style="left:29px;top:137px;width:977px;height:1px;background:#c4c4ce"></div><div class="a" style="left:29px;top:137px;width:1px;height:512px;background:#c4c4ce"></div><div class="a" style="left:30px;top:138px;width:976px;height:511px;background:#c7c9cf;box-sizing:border-box;border-top:1px solid #000;border-left:1px solid #000;overflow:hidden" id="doc">
<div class="a" style="left:89px;top:3px;width:798px;height:520px;background:#fff;box-sizing:border-box;border:1px solid #000;border-right:3px solid #000" id="page"></div>
<div class="a" style="left:-31px;top:-139px;width:1024px;height:721px" id="dc">
<div class="a" style="left:197px;top:218px;width:643px;height:1px;background:#c0c0c0"></div><div class="a" style="left:197px;top:218px;width:1px;height:440px;background:#c0c0c0"></div><div class="a" style="left:839px;top:218px;width:1px;height:440px;background:#c0c0c0"></div>
<div class="t" style="left:197px;top:220.30px;font-family:'Liberation Sans','DejaVu Sans',sans-serif;font-size:21.5px;font-weight:bold;letter-spacing:0.04px;">Системы уравнений и неравенств с условиями</div>
<div class="a" style="left:375px;top:218px;width:2px;height:24px;background:#000"></div>
<div class="t" style="left:234.5px;top:250.60px;font-family:'Liberation Serif','DejaVu Serif',serif;font-size:16px;word-spacing:3.38px;">Иногда к уравнениям требуется дописать условие. Например, </div>
<div class="a" style="left:692px;top:250px;width:4px;height:18px;background:#c0c0c0"></div><div class="a" style="left:705px;top:250px;width:4px;height:18px;background:#c0c0c0"></div><div class="a" style="left:763px;top:250px;width:4px;height:18px;background:#c0c0c0"></div>
<div class="t" style="left:683px;top:250.60px;font-family:'Liberation Serif','DejaVu Serif',serif;font-size:16px;font-style:italic;">y</div>
<div class="t" style="left:696px;top:250.60px;font-family:'Liberation Serif','DejaVu Serif',serif;font-size:16px;">=</div>
<div class="t" style="left:709.5px;top:250.60px;font-family:'Liberation Serif','DejaVu Serif',serif;font-size:16px;">0</div>
<div class="t" style="left:725px;top:250.60px;font-family:'Liberation Serif','DejaVu Serif',serif;font-size:16px;">при</div>
<div class="t" style="left:756.5px;top:250.60px;font-family:'Liberation Serif','DejaVu Serif',serif;font-size:16px;font-style:italic;">x</div>
<svg class="a" style="left:681px;top:266px" width="13" height="2"><polyline points="0.5,1.7 2.5,0.3 4.5,1.7 6.5,0.3 8.5,1.7 10.5,0.3" fill="none" stroke="#f21c1c" stroke-width="1.150"/></svg><svg class="a" style="left:755px;top:266px" width="11" height="2"><polyline points="0.5,1.7 2.5,0.3 4.5,1.7 6.5,0.3 8.5,1.7" fill="none" stroke="#f21c1c" stroke-width="1.150"/></svg>
<div class="t" style="left:197px;top:268.60px;font-family:'Liberation Serif','DejaVu Serif',serif;font-size:16px;letter-spacing:0.02px;">вместо слова <i>при</i> ставят запятую. Запишем пример системы уравнений с условиями.</div>
<div class="a" style="left:197px;top:303px;width:643px;height:69px;box-sizing:border-box;border:1px solid #000;"></div><div class="a" style="left:518px;top:303px;width:1px;height:69px;background:#000"></div>
<div class="a" style="left:208px;top:318px;width:163px;height:39px;box-sizing:border-box;border:1px solid #b4b4b4"></div><svg class="a" style="left:210px;top:319px" width="8" height="37"><path d="M6.500 .5Q4.500 1.500 4.500 4V15.5Q4.500 17.5 3 18.5Q4.500 19.5 4.500 21.5V33Q4.500 35.5 6.500 36.5" fill="none" stroke="#555" stroke-width=".8"/></svg>
<div class="t" style="left:219px;top:321.10px;font-family:'Liberation Serif','DejaVu Serif',serif;font-size:16px;font-style:italic;">уравнение1</div>
<div class="t" style="left:297.5px;top:321.10px;font-family:'Liberation Serif','DejaVu Serif',serif;font-size:16px;font-style:italic;">,</div>
<div class="t" style="left:304px;top:321.10px;font-family:'Liberation Serif','DejaVu Serif',serif;font-size:16px;font-style:italic;">условие1</div>
<div class="t" style="left:219px;top:338.10px;font-family:'Liberation Serif','DejaVu Serif',serif;font-size:16px;font-style:italic;">уравнение2</div>
<div class="t" style="left:297.5px;top:338.10px;font-family:'Liberation Serif','DejaVu Serif',serif;font-size:16px;font-style:italic;">,</div>
<div class="t" style="left:305px;top:338.10px;font-family:'Liberation Serif','DejaVu Serif',serif;font-size:16px;font-style:italic;">условие2</div>
<div class="t" style="left:522px;top:307.78px;font-family:'Liberation Mono','DejaVu Sans Mono',monospace;font-size:13.33px;">left lbrace alignl</div>
<div class="t" style="left:522px;top:322.78px;font-family:'Liberation Mono','DejaVu Sans Mono',monospace;font-size:13.33px;">stack{уравнение1, условие1#</div>
<div class="t" style="left:522px;top:337.78px;font-family:'Liberation Mono','DejaVu Sans Mono',monospace;font-size:13.33px;">уравнение2, условие2}</div>
<div class="t" style="left:522px;top:352.78px;font-family:'Liberation Mono','DejaVu Sans Mono',monospace;font-size:13.33px;">right none</div>
<svg class="a" style="left:521px;top:319px" width="34" height="2"><polyline points="0.5,1.7 2.5,0.3 4.5,1.7 6.5,0.3 8.5,1.7 10.5,0.3 12.5,1.7 14.5,0.3 16.5,1.7 18.5,0.3 20.5,1.7 22.5,0.3 24.5,1.7 26.5,0.3 28.5,1.7 30.5,0.3 32.5,1.7" fill="none" stroke="#f21c1c" stroke-width="1.150"/></svg><svg class="a" style="left:561px;top:319px" width="50" height="2"><polyline points="0.5,1.7 2.5,0.3 4.5,1.7 6.5,0.3 8.5,1.7 10.5,0.3 12.5,1.7 14.5,0.3 16.5,1.7 18.5,0.3 20.5,1.7 22.5,0.3 24.5,1.7 26.5,0.3 28.5,1.7 30.5,0.3 32.5,1.7 34.5,0.3 36.5,1.7 38.5,0.3 40.5,1.7 42.5,0.3 44.5,1.7 46.5,0.3 48.5,1.7" fill="none" stroke="#f21c1c" stroke-width="1.150"/></svg><svg class="a" style="left:617px;top:319px" width="50" height="2"><polyline points="0.5,1.7 2.5,0.3 4.5,1.7 6.5,0.3 8.5,1.7 10.5,0.3 12.5,1.7 14.5,0.3 16.5,1.7 18.5,0.3 20.5,1.7 22.5,0.3 24.5,1.7 26.5,0.3 28.5,1.7 30.5,0.3 32.5,1.7 34.5,0.3 36.5,1.7 38.5,0.3 40.5,1.7 42.5,0.3 44.5,1.7 46.5,0.3 48.5,1.7" fill="none" stroke="#f21c1c" stroke-width="1.150"/></svg><svg class="a" style="left:521px;top:334px" width="42" height="2"><polyline points="0.5,1.7 2.5,0.3 4.5,1.7 6.5,0.3 8.5,1.7 10.5,0.3 12.5,1.7 14.5,0.3 16.5,1.7 18.5,0.3 20.5,1.7 22.5,0.3 24.5,1.7 26.5,0.3 28.5,1.7 30.5,0.3 32.5,1.7 34.5,0.3 36.5,1.7 38.5,0.3 40.5,1.7" fill="none" stroke="#f21c1c" stroke-width="1.150"/></svg><svg class="a" style="left:521px;top:364px" width="42" height="2"><polyline points="0.5,1.7 2.5,0.3 4.5,1.7 6.5,0.3 8.5,1.7 10.5,0.3 12.5,1.7 14.5,0.3 16.5,1.7 18.5,0.3 20.5,1.7 22.5,0.3 24.5,1.7 26.5,0.3 28.5,1.7 30.5,0.3 32.5,1.7 34.5,0.3 36.5,1.7 38.5,0.3 40.5,1.7" fill="none" stroke="#f21c1c" stroke-width="1.150"/></svg><svg class="a" style="left:569px;top:364px" width="34" height="2"><polyline points="0.5,1.7 2.5,0.3 4.5,1.7 6.5,0.3 8.5,1.7 10.5,0.3 12.5,1.7 14.5,0.3 16.5,1.7 18.5,0.3 20.5,1.7 22.5,0.3 24.5,1.7 26.5,0.3 28.5,1.7 30.5,0.3 32.5,1.7" fill="none" stroke="#f21c1c" stroke-width="1.150"/></svg>
<div class="t" style="left:235px;top:389.60px;font-family:'Liberation Serif','DejaVu Serif',serif;font-size:16px;word-spacing:0.5px;">Однако подобная запись не всегда будет смотреться эстетично. Например:</div>
<div class="a" style="left:197px;top:424px;width:643px;height:69px;box-sizing:border-box;border:1px solid #000;"></div><div class="a" style="left:518px;top:424px;width:1px;height:69px;background:#000"></div>
<div class="a" style="left:208px;top:440px;width:218px;height:39px;box-sizing:border-box;border:1px solid #b4b4b4"></div><svg class="a" style="left:210px;top:441px" width="8" height="37"><path d="M6.500 .5Q4.500 1.500 4.500 4V15.5Q4.500 17.5 3 18.5Q4.500 19.5 4.500 21.5V33Q4.500 35.5 6.500 36.5" fill="none" stroke="#555" stroke-width=".8"/></svg>
<div class="t" style="left:219px;top:442.10px;font-family:'Liberation Serif','DejaVu Serif',serif;font-size:16px;font-style:italic;">уравнение1</div>
<div class="t" style="left:298px;top:442.10px;font-family:'Liberation Serif','DejaVu Serif',serif;font-size:16px;font-style:italic;">,</div>
<div class="t" style="left:305px;top:442.10px;font-family:'Liberation Serif','DejaVu Serif',serif;font-size:16px;font-style:italic;">условие1</div>
<div class="t" style="left:219px;top:460.10px;font-family:'Liberation Serif','DejaVu Serif',serif;font-size:16px;font-style:italic;">длинное</div>
<div class="t" style="left:275.5px;top:460.10px;font-family:'Liberation Serif','DejaVu Serif',serif;font-size:16px;font-style:italic;">уравнение2</div>
<div class="t" style="left:354.5px;top:460.10px;font-family:'Liberation Serif','DejaVu Serif',serif;font-size:16px;font-style:italic;">,</div>
<div class="t" style="left:362px;top:460.10px;font-family:'Liberation Serif','DejaVu Serif',serif;font-size:16px;font-style:italic;">условие2</div>
<div class="t" style="left:522px;top:428.78px;font-family:'Liberation Mono','DejaVu Sans Mono',monospace;font-size:13.33px;">left lbrace alignl</div>
<div class="t" style="left:522px;top:443.78px;font-family:'Liberation Mono','DejaVu Sans Mono',monospace;font-size:13.33px;">stack{уравнение1, условие1#</div>
<div class="t" style="left:522px;top:458.78px;font-family:'Liberation Mono','DejaVu Sans Mono',monospace;font-size:13.33px;">длинное уравнение2, условие2}</div>
<div class="t" style="left:522px;top:473.78px;font-family:'Liberation Mono','DejaVu Sans Mono',monospace;font-size:13.33px;">right none</div>
<svg class="a" style="left:521px;top:440px" width="34" height="2"><polyline points="0.5,1.7 2.5,0.3 4.5,1.7 6.5,0.3 8.5,1.7 10.5,0.3 12.5,1.7 14.5,0.3 16.5,1.7 18.5,0.3 20.5,1.7 22.5,0.3 24.5,1.7 26.5,0.3 28.5,1.7 30.5,0.3 32.5,1.7" fill="none" stroke="#f21c1c" stroke-width="1.150"/></svg><svg class="a" style="left:561px;top:440px" width="50" height="2"><polyline points="0.5,1.7 2.5,0.3 4.5,1.7 6.5,0.3 8.5,1.7 10.5,0.3 12.5,1.7 14.5,0.3 16.5,1.7 18.5,0.3 20.5,1.7 22.5,0.3 24.5,1.7 26.5,0.3 28.5,1.7 30.5,0.3 32.5,1.7 34.5,0.3 36.5,1.7 38.5,0.3 40.5,1.7 42.5,0.3 44.5,1.7 46.5,0.3 48.5,1.7" fill="none" stroke="#f21c1c" stroke-width="1.150"/></svg><svg class="a" style="left:617px;top:440px" width="50" height="2"><polyline points="0.5,1.7 2.5,0.3 4.5,1.7 6.5,0.3 8.5,1.7 10.5,0.3 12.5,1.7 14.5,0.3 16.5,1.7 18.5,0.3 20.5,1.7 22.5,0.3 24.5,1.7 26.5,0.3 28.5,1.7 30.5,0.3 32.5,1.7 34.5,0.3 36.5,1.7 38.5,0.3 40.5,1.7 42.5,0.3 44.5,1.7 46.5,0.3 48.5,1.7" fill="none" stroke="#f21c1c" stroke-width="1.150"/></svg><svg class="a" style="left:521px;top:455px" width="42" height="2"><polyline points="0.5,1.7 2.5,0.3 4.5,1.7 6.5,0.3 8.5,1.7 10.5,0.3 12.5,1.7 14.5,0.3 16.5,1.7 18.5,0.3 20.5,1.7 22.5,0.3 24.5,1.7 26.5,0.3 28.5,1.7 30.5,0.3 32.5,1.7 34.5,0.3 36.5,1.7 38.5,0.3 40.5,1.7" fill="none" stroke="#f21c1c" stroke-width="1.150"/></svg><svg class="a" style="left:521px;top:485px" width="42" height="2"><polyline points="0.5,1.7 2.5,0.3 4.5,1.7 6.5,0.3 8.5,1.7 10.5,0.3 12.5,1.7 14.5,0.3 16.5,1.7 18.5,0.3 20.5,1.7 22.5,0.3 24.5,1.7 26.5,0.3 28.5,1.7 30.5,0.3 32.5,1.7 34.5,0.3 36.5,1.7 38.5,0.3 40.5,1.7" fill="none" stroke="#f21c1c" stroke-width="1.150"/></svg><svg class="a" style="left:569px;top:485px" width="34" height="2"><polyline points="0.5,1.7 2.5,0.3 4.5,1.7 6.5,0.3 8.5,1.7 10.5,0.3 12.5,1.7 14.5,0.3 16.5,1.7 18.5,0.3 20.5,1.7 22.5,0.3 24.5,1.7 26.5,0.3 28.5,1.7 30.5,0.3 32.5,1.7" fill="none" stroke="#f21c1c" stroke-width="1.150"/></svg>
<div class="t" style="left:235px;top:510.60px;font-family:'Liberation Serif','DejaVu Serif',serif;font-size:16px;word-spacing:8px;">Требуется реализовать такую запись, чтобы условия были друг под</div>
<div class="t" style="left:197px;top:528.60px;font-family:'Liberation Serif','DejaVu Serif',serif;font-size:16px;word-spacing:0.46px;">выровнены по их левому краю. В таком случае лучше использовать команду <span style="font-family:'Liberation Mono','DejaVu Sans Mono',monospace;font-size:13.33px;word-spacing:0">matrix</span></div>
<svg class="a" style="left:727px;top:543px" width="41" height="2"><polyline points="0.5,1.7 2.5,0.3 4.5,1.7 6.5,0.3 8.5,1.7 10.5,0.3 12.5,1.7 14.5,0.3 16.5,1.7 18.5,0.3 20.5,1.7 22.5,0.3 24.5,1.7 26.5,0.3 28.5,1.7 30.5,0.3 32.5,1.7 34.5,0.3 36.5,1.7 38.5,0.3" fill="none" stroke="#f21c1c" stroke-width="1.150"/></svg><div class="a" style="left:197px;top:561px;width:643px;height:69px;box-sizing:border-box;border:1px solid #000;"></div><div class="a" style="left:518px;top:561px;width:1px;height:69px;background:#000"></div>
<div class="a" style="left:208px;top:576px;width:231px;height:41px;box-sizing:border-box;border:1px solid #b4b4b4"></div><svg class="a" style="left:210px;top:577px" width="8" height="39"><path d="M6.500 .5Q4.500 1.500 4.500 4V16.5Q4.500 18.5 3 19.5Q4.500 20.5 4.500 22.5V35Q4.500 37.5 6.500 38.5" fill="none" stroke="#555" stroke-width=".8"/></svg>
<div class="t" style="left:219px;top:580.10px;font-family:'Liberation Serif','DejaVu Serif',serif;font-size:16px;font-style:italic;">уравнение1</div>
<div class="t" style="left:299px;top:580.10px;font-family:'Liberation Serif','DejaVu Serif',serif;font-size:16px;font-style:italic;">,</div>
<div class="t" style="left:374.5px;top:580.10px;font-family:'Liberation Serif','DejaVu Serif',serif;font-size:16px;font-style:italic;">условие1</div>
<div class="t" style="left:219px;top:599.10px;font-family:'Liberation Serif','DejaVu Serif',serif;font-size:16px;font-style:italic;">длинное</div>
<div class="t" style="left:275.5px;top:599.10px;font-family:'Liberation Serif','DejaVu Serif',serif;font-size:16px;font-style:italic;">уравнение2,</div>
<div class="t" style="left:374.5px;top:599.10px;font-family:'Liberation Serif','DejaVu Serif',serif;font-size:16px;font-style:italic;">условие2</div>
<div class="t" style="left:522px;top:565.78px;font-family:'Liberation Mono','DejaVu Sans Mono',monospace;font-size:13.33px;">left lbrace alignl</div>
<div class="t" style="left:522px;top:580.78px;font-family:'Liberation Mono','DejaVu Sans Mono',monospace;font-size:13.33px;">matrix{уравнение1,#условие1##</div>
<div class="t" style="left:522px;top:595.78px;font-family:'Liberation Mono','DejaVu Sans Mono',monospace;font-size:13.33px;">длинное уравнение2,#условие2}</div>
<div class="t" style="left:522px;top:610.78px;font-family:'Liberation Mono','DejaVu Sans Mono',monospace;font-size:13.33px;">right none</div>
<svg class="a" style="left:521px;top:577px" width="34" height="2"><polyline points="0.5,1.7 2.5,0.3 4.5,1.7 6.5,0.3 8.5,1.7 10.5,0.3 12.5,1.7 14.5,0.3 16.5,1.7 18.5,0.3 20.5,1.7 22.5,0.3 24.5,1.7 26.5,0.3 28.5,1.7 30.5,0.3 32.5,1.7" fill="none" stroke="#f21c1c" stroke-width="1.150"/></svg><svg class="a" style="left:561px;top:577px" width="50" height="2"><polyline points="0.5,1.7 2.5,0.3 4.5,1.7 6.5,0.3 8.5,1.7 10.5,0.3 12.5,1.7 14.5,0.3 16.5,1.7 18.5,0.3 20.5,1.7 22.5,0.3 24.5,1.7 26.5,0.3 28.5,1.7 30.5,0.3 32.5,1.7 34.5,0.3 36.5,1.7 38.5,0.3 40.5,1.7 42.5,0.3 44.5,1.7 46.5,0.3 48.5,1.7" fill="none" stroke="#f21c1c" stroke-width="1.150"/></svg><svg class="a" style="left:617px;top:577px" width="50" height="2"><polyline points="0.5,1.7 2.5,0.3 4.5,1.7 6.5,0.3 8.5,1.7 10.5,0.3 12.5,1.7 14.5,0.3 16.5,1.7 18.5,0.3 20.5,1.7 22.5,0.3 24.5,1.7 26.5,0.3 28.5,1.7 30.5,0.3 32.5,1.7 34.5,0.3 36.5,1.7 38.5,0.3 40.5,1.7 42.5,0.3 44.5,1.7 46.5,0.3 48.5,1.7" fill="none" stroke="#f21c1c" stroke-width="1.150"/></svg><svg class="a" style="left:521px;top:592px" width="50" height="2"><polyline points="0.5,1.7 2.5,0.3 4.5,1.7 6.5,0.3 8.5,1.7 10.5,0.3 12.5,1.7 14.5,0.3 16.5,1.7 18.5,0.3 20.5,1.7 22.5,0.3 24.5,1.7 26.5,0.3 28.5,1.7 30.5,0.3 32.5,1.7 34.5,0.3 36.5,1.7 38.5,0.3 40.5,1.7 42.5,0.3 44.5,1.7 46.5,0.3 48.5,1.7" fill="none" stroke="#f21c1c" stroke-width="1.150"/></svg><svg class="a" style="left:521px;top:622px" width="42" height="2"><polyline points="0.5,1.7 2.5,0.3 4.5,1.7 6.5,0.3 8.5,1.7 10.5,0.3 12.5,1.7 14.5,0.3 16.5,1.7 18.5,0.3 20.5,1.7 22.5,0.3 24.5,1.7 26.5,0.3 28.5,1.7 30.5,0.3 32.5,1.7 34.5,0.3 36.5,1.7 38.5,0.3 40.5,1.7" fill="none" stroke="#f21c1c" stroke-width="1.150"/></svg><svg class="a" style="left:569px;top:622px" width="34" height="2"><polyline points="0.5,1.7 2.5,0.3 4.5,1.7 6.5,0.3 8.5,1.7 10.5,0.3 12.5,1.7 14.5,0.3 16.5,1.7 18.5,0.3 20.5,1.7 22.5,0.3 24.5,1.7 26.5,0.3 28.5,1.7 30.5,0.3 32.5,1.7" fill="none" stroke="#f21c1c" stroke-width="1.150"/></svg>
<div class="t" style="left:235px;top:643.60px;font-family:'Liberation Serif','DejaVu Serif',serif;font-size:16px;">Требуется</div>
</div>
</div>
<div id="panel" class="a" style="left:766px;top:81px;width:224px;height:560px;box-shadow:0 0 0 1px rgba(255,255,255,.55);box-sizing:border-box;border:1px solid #70727a;border-radius:4px 4px 0 0;background:#efeff7;overflow:hidden">
<div class="a" style="left:0;top:0;width:222px;height:20px;background:linear-gradient(#eeeef6 0,#d3d5e1 35%,#d4d6e2 65%,#e4e6ee 100%)"></div><div class="a" style="left:0;top:0;width:222px;height:558px;box-sizing:border-box;border:1px solid #f8f8ff;border-right-color:#e0e0ea;border-bottom-color:#e0e0ea;border-radius:4px 4px 0 0"></div><div class="a" style="left:2px;top:20px;width:218px;height:536px;box-sizing:border-box;border:1px solid #fafaff;border-right-color:#d8d8e4;border-bottom-color:#d8d8e4"></div>
</div>
<svg class="a" style="left:773px;top:84px" width="14" height="16" viewBox="0 0 14 16"><path d="M1.500 3h8l3.500 3v9.500H1.500z" fill="#dfe9ec" stroke="#a8bcc4" stroke-width=".8"/><path d="M1 1.500l7-1 2 2-8 3z" fill="#fff" stroke="#b8c4c8" stroke-width=".5"/><path d="M1.500 7l-.8 8.500h2.500V7z" fill="#4a8494"/><path d="M5 8.500h6M5 10.500h5M5 12.500h6" stroke="#7ea4b8"/></svg>
<div class="t" style="left:793px;top:90px;font-size:11px;font-weight:bold;letter-spacing:0.05px">Стили и форматировани</div>
<div class="a" style="left:953px;top:85px;width:15px;height:15px;box-sizing:border-box;border:1px solid #c4c4d2;border-radius:3px"></div><div class="a" style="left:957px;top:89px;width:7px;height:7px;box-sizing:border-box;border:1px solid #000;border-top-width:2px"></div><div class="a" style="left:969px;top:85px;width:15px;height:15px;box-sizing:border-box;border:1px solid #c4c4d2;border-radius:3px"></div><svg class="a" style="left:972px;top:88px" width="9" height="9" viewBox="0 0 9 9"><path d="M1.200 1.200l6.600 6.600M7.800 1.200L1.200 7.800" stroke="#000" stroke-width="2"/></svg>
<div class="tog" style="left:773px;top:105px;width:25px;height:27px"></div>
<svg class="a" style="left:778px;top:110px" width="16" height="15" viewBox="0 0 16 15"><defs><linearGradient id="nbg" x1="0" y1="0" x2="1" y2="1"><stop offset="0" stop-color="#fff"/><stop offset=".5" stop-color="#ececec"/><stop offset="1" stop-color="#fff"/></linearGradient></defs><rect x="1.600" y=".8" width="13" height="13.400" rx="1.500" fill="url(#nbg)" stroke="#000" stroke-width="1.300"/><rect x="0" y="2" width="2" height="1.200" rx=".5" fill="#000"/><rect x="0" y="4" width="2" height="1.200" rx=".5" fill="#000"/><rect x="0" y="6" width="2" height="1.200" rx=".5" fill="#000"/><rect x="0" y="8" width="2" height="1.200" rx=".5" fill="#000"/><rect x="0" y="10" width="2" height="1.200" rx=".5" fill="#000"/><rect x="0" y="12" width="2" height="1.200" rx=".5" fill="#000"/><path d="M8.200 3.600H12.500V4.800H11.800V12H10.500V4.800H9.800V12H8.500V8.200A2.400 2.400 0 0 1 8.200 3.600z" fill="#000" stroke="#000" stroke-width=".3"/></svg>
<svg class="a" style="left:803px;top:110px" width="16" height="15" viewBox="0 0 16 15"><defs><linearGradient id="nbg" x1="0" y1="0" x2="1" y2="1"><stop offset="0" stop-color="#fff"/><stop offset=".5" stop-color="#ececec"/><stop offset="1" stop-color="#fff"/></linearGradient></defs><rect x="1.600" y=".8" width="13" height="13.400" rx="1.500" fill="url(#nbg)" stroke="#000" stroke-width="1.300"/><rect x="0" y="2" width="2" height="1.200" rx=".5" fill="#000"/><rect x="0" y="4" width="2" height="1.200" rx=".5" fill="#000"/><rect x="0" y="6" width="2" height="1.200" rx=".5" fill="#000"/><rect x="0" y="8" width="2" height="1.200" rx=".5" fill="#000"/><rect x="0" y="10" width="2" height="1.200" rx=".5" fill="#000"/><rect x="0" y="12" width="2" height="1.200" rx=".5" fill="#000"/><text x="8.700" y="11.200" font-family="DejaVu Sans,sans-serif" font-size="11.500" text-anchor="middle" fill="#111">a</text></svg>
<svg class="a" style="left:828px;top:110px" width="16" height="15" viewBox="0 0 16 15"><defs><linearGradient id="nbg" x1="0" y1="0" x2="1" y2="1"><stop offset="0" stop-color="#fff"/><stop offset=".5" stop-color="#ececec"/><stop offset="1" stop-color="#fff"/></linearGradient></defs><rect x="1.600" y=".8" width="13" height="13.400" rx="1.500" fill="url(#nbg)" stroke="#000" stroke-width="1.300"/><rect x="0" y="2" width="2" height="1.200" rx=".5" fill="#000"/><rect x="0" y="4" width="2" height="1.200" rx=".5" fill="#000"/><rect x="0" y="6" width="2" height="1.200" rx=".5" fill="#000"/><rect x="0" y="8" width="2" height="1.200" rx=".5" fill="#000"/><rect x="0" y="10" width="2" height="1.200" rx=".5" fill="#000"/><rect x="0" y="12" width="2" height="1.200" rx=".5" fill="#000"/><rect x="5.500" y="4" width="7" height="7.500" fill="#dadada"/><path d="M5 6V3.700h2.500M10.500 3.700H13V6M13 9.500v2.300h-2.500M7.500 11.800H5V9.500" fill="none" stroke="#111" stroke-width="1.100"/></svg>
<svg class="a" style="left:853px;top:110px" width="16" height="15" viewBox="0 0 16 15"><defs><linearGradient id="nbg" x1="0" y1="0" x2="1" y2="1"><stop offset="0" stop-color="#fff"/><stop offset=".5" stop-color="#ececec"/><stop offset="1" stop-color="#fff"/></linearGradient></defs><rect x="1.600" y=".8" width="13" height="13.400" rx="1.500" fill="url(#nbg)" stroke="#000" stroke-width="1.300"/><rect x="0" y="2" width="2" height="1.200" rx=".5" fill="#000"/><rect x="0" y="4" width="2" height="1.200" rx=".5" fill="#000"/><rect x="0" y="6" width="2" height="1.200" rx=".5" fill="#000"/><rect x="0" y="8" width="2" height="1.200" rx=".5" fill="#000"/><rect x="0" y="10" width="2" height="1.200" rx=".5" fill="#000"/><rect x="0" y="12" width="2" height="1.200" rx=".5" fill="#000"/><path d="M5.500 3.500h4l2.500 2.500v6H5.500z" fill="#fff" stroke="#111" stroke-width="1.100"/><path d="M9.500 3.500v2.500h2.500" fill="none" stroke="#111" stroke-width=".9"/></svg>
<svg class="a" style="left:878px;top:110px" width="16" height="15" viewBox="0 0 16 15"><defs><linearGradient id="nbg" x1="0" y1="0" x2="1" y2="1"><stop offset="0" stop-color="#fff"/><stop offset=".5" stop-color="#ececec"/><stop offset="1" stop-color="#fff"/></linearGradient></defs><rect x="1.600" y=".8" width="13" height="13.400" rx="1.500" fill="url(#nbg)" stroke="#000" stroke-width="1.300"/><rect x="0" y="2" width="2" height="1.200" rx=".5" fill="#000"/><rect x="0" y="4" width="2" height="1.200" rx=".5" fill="#000"/><rect x="0" y="6" width="2" height="1.200" rx=".5" fill="#000"/><rect x="0" y="8" width="2" height="1.200" rx=".5" fill="#000"/><rect x="0" y="10" width="2" height="1.200" rx=".5" fill="#000"/><rect x="0" y="12" width="2" height="1.200" rx=".5" fill="#000"/><rect x="5" y="3.500" width="2" height="2" fill="#111"/><rect x="7" y="6.500" width="2" height="2" fill="#111"/><rect x="5" y="9.500" width="2" height="2" fill="#111"/><path d="M8 4.500h5M10 7.500h3M8 10.500h4" stroke="#333"/></svg>
<svg class="a" style="left:924px;top:108px" width="19" height="19" viewBox="0 0 19 19"><defs><linearGradient id="bk" x1="0" y1="0" x2="1" y2="1"><stop offset="0" stop-color="#fff"/><stop offset="1" stop-color="#dcdcdc"/></linearGradient></defs><path d="M13 9q4.300-1.800 4.300 1.500v4" fill="none" stroke="#4a68b0" stroke-width="2.200"/><path d="M13 9q4.300-1.800 4.300 1.500v4" fill="none" stroke="#a8bce8" stroke-width=".7"/><path d="M5 5.500L14.500 9.500 10 18 1.500 13.500z" fill="url(#bk)" stroke="#8a8a8a" stroke-width="1" stroke-linejoin="round"/><circle cx="7" cy="4.800" r="2.400" fill="none" stroke="#6e6e6e" stroke-width="1.100"/><path d="M7.500 7l1 3" stroke="#8a8a8a" stroke-width=".9"/><circle cx="8.500" cy="10" r="1.400" fill="#7a7a7a"/></svg>
<svg class="a" style="left:951px;top:113px" width="15" height="10" viewBox="0 0 15 10"><path d="M2.800 0H7v1H6.200V9.500H5.200V1H4.400V9.500H3.400V5A2.500 2.500 0 0 1 2.800 0z" fill="#555"/><path d="M8.500 .5h5.500M8.500 2.500h5.500M8.500 4.500h5.500M8.500 6.500h5.500M8.500 8.500h5.500" stroke="#666"/></svg>
<div class="dds" style="left:973px;top:116px"></div>
<div class="a" style="left:775px;top:137px;width:206px;height:468px;background:#fff"></div>
<div class="a" style="left:777px;top:188px;width:91px;height:17px;background:#dfe3f3"></div>
<div class="t" style="left:777px;top:139px;font-size:14px">Базовый</div><div class="t" style="left:777px;top:156px;font-size:14px">Базовый-Times</div><div class="t" style="left:777px;top:173px;font-size:14px">Заголовок</div><div class="t" style="left:777px;top:190px;font-size:14px;color:#f6f6fc">Заголовок 1</div><div class="t" style="left:777px;top:207px;font-size:14px">Заголовок 10</div><div class="t" style="left:777px;top:224px;font-size:14px">Заголовок 2</div><div class="t" style="left:777px;top:241px;font-size:14px">Заголовок 3</div><div class="t" style="left:777px;top:258px;font-size:14px">Заголовок 4</div><div class="t" style="left:777px;top:275px;font-size:14px">Заголовок 5</div><div class="t" style="left:777px;top:292px;font-size:14px">Заголовок 6</div><div class="t" style="left:777px;top:309px;font-size:14px">Заголовок 7</div><div class="t" style="left:777px;top:326px;font-size:14px">Заголовок 8</div><div class="t" style="left:777px;top:343px;font-size:14px">Заголовок 9</div><div class="t" style="left:777px;top:360px;font-size:14px">Заметки</div><div class="t" style="left:777px;top:377px;font-size:14px">Код</div><div class="t" style="left:777px;top:394px;font-size:14px">Обратный отступ</div><div class="t" style="left:777px;top:411px;font-size:14px">Основной текст</div><div class="t" style="left:777px;top:428px;font-size:14px">Основной текст с отступом</div><div class="t" style="left:777px;top:445px;font-size:14px">Отступы</div><div class="t" style="left:777px;top:462px;font-size:14px">Первая строка с отступом</div><div class="t" style="left:777px;top:479px;font-size:14px">Подпись</div><div class="t" style="left:777px;top:496px;font-size:14px">Приветствие</div>
<div class="a" style="left:773px;top:610px;width:210px;height:25px;box-sizing:border-box;border:1px solid #8a8a96;border-radius:4px;background:linear-gradient(#f6f6fc,#d2d2de);box-shadow:inset 0 1px 0 #fff"><div class="a" style="left:192px;top:0;width:1px;height:23px;background:#a4a4b0"></div><div class="a" style="left:193px;top:0;width:1px;height:23px;background:#fafafe"></div><div class="a" style="left:196px;top:9px;width:9px;height:5px;background:#000;clip-path:polygon(.5px 0,8.5px 0,4.5px 4.6px)"></div></div><div class="t" style="left:776px;top:616px;font-size:14px;letter-spacing:-.33px">Автоматически</div>
<div class="a" style="left:1006px;top:110px;width:16px;height:539px;background:repeating-conic-gradient(#fff 0 25%,#efeff7 0 50%) 0 0/2px 2px"></div><div class="a" style="left:1023px;top:110px;width:1px;height:555px;background:#f8f8fd"></div>
<div class="sb" style="left:1006px;top:111px;width:16px;height:15px"><div class="a" style="left:3px;top:4px;width:0;height:0;border-left:4px solid transparent;border-right:4px solid transparent;border-bottom:4px solid #000"></div></div><div class="sb" style="left:1006px;top:183px;width:16px;height:24px"><div class="a" style="left:3px;top:4px;width:2px;height:2px;background:linear-gradient(135deg,#b8b8c6 50%,#fff 50%)"></div><div class="a" style="left:7px;top:4px;width:2px;height:2px;background:linear-gradient(135deg,#b8b8c6 50%,#fff 50%)"></div><div class="a" style="left:11px;top:4px;width:2px;height:2px;background:linear-gradient(135deg,#b8b8c6 50%,#fff 50%)"></div><div class="a" style="left:3px;top:8px;width:2px;height:2px;background:linear-gradient(135deg,#b8b8c6 50%,#fff 50%)"></div><div class="a" style="left:7px;top:8px;width:2px;height:2px;background:linear-gradient(135deg,#b8b8c6 50%,#fff 50%)"></div><div class="a" style="left:11px;top:8px;width:2px;height:2px;background:linear-gradient(135deg,#b8b8c6 50%,#fff 50%)"></div><div class="a" style="left:3px;top:12px;width:2px;height:2px;background:linear-gradient(135deg,#b8b8c6 50%,#fff 50%)"></div><div class="a" style="left:7px;top:12px;width:2px;height:2px;background:linear-gradient(135deg,#b8b8c6 50%,#fff 50%)"></div><div class="a" style="left:11px;top:12px;width:2px;height:2px;background:linear-gradient(135deg,#b8b8c6 50%,#fff 50%)"></div><div class="a" style="left:3px;top:16px;width:2px;height:2px;background:linear-gradient(135deg,#b8b8c6 50%,#fff 50%)"></div><div class="a" style="left:7px;top:16px;width:2px;height:2px;background:linear-gradient(135deg,#b8b8c6 50%,#fff 50%)"></div><div class="a" style="left:11px;top:16px;width:2px;height:2px;background:linear-gradient(135deg,#b8b8c6 50%,#fff 50%)"></div></div><div class="sb" style="left:1006px;top:569px;width:16px;height:16px"><div class="a" style="left:3px;top:5px;width:0;height:0;border-left:4px solid transparent;border-right:4px solid transparent;border-bottom:4px solid #000"></div></div><div class="sb" style="left:1006px;top:585px;width:16px;height:16px"><div class="a" style="left:3px;top:6px;width:0;height:0;border-left:4px solid transparent;border-right:4px solid transparent;border-top:4px solid #000"></div></div><div class="sb" style="left:1006px;top:601px;width:16px;height:16px"><div class="a" style="left:4px;top:3px;width:0;height:0;border-left:3px solid transparent;border-right:3px solid transparent;border-bottom:3px solid #000"></div><div class="a" style="left:4px;top:7px;width:0;height:0;border-left:3px solid transparent;border-right:3px solid transparent;border-bottom:3px solid #000"></div><div class="a" style="left:4px;top:6px;width:6px;height:1px;background:#000"></div></div><div class="sb" style="left:1006px;top:617px;width:16px;height:16px"><div class="a" style="left:3px;top:4px;width:8px;height:7px;border-radius:3px 3px 1px 1px;background:#4a5ae0;box-shadow:inset 1px 1px 1px #a8b0ff"></div></div><div class="sb" style="left:1006px;top:633px;width:16px;height:16px"><div class="a" style="left:4px;top:4px;width:0;height:0;border-left:3px solid transparent;border-right:3px solid transparent;border-top:3px solid #000"></div><div class="a" style="left:4px;top:8px;width:0;height:0;border-left:3px solid transparent;border-right:3px solid transparent;border-top:3px solid #000"></div><div class="a" style="left:4px;top:7px;width:6px;height:1px;background:#000"></div></div>
<div class="sb" style="left:2px;top:649px;width:16px;height:16px"><div class="a" style="left:4px;top:3px;width:0;height:0;border-top:4px solid transparent;border-bottom:4px solid transparent;border-right:4px solid #000"></div></div><div class="sb" style="left:18px;top:649px;width:956px;height:16px;border-radius:2px;background:linear-gradient(#f4f4fa,#e8e8f2)"><div class="a" style="left:468px;top:2px;width:2px;height:2px;background:linear-gradient(135deg,#b8b8c6 50%,#fff 50%)"></div><div class="a" style="left:472px;top:2px;width:2px;height:2px;background:linear-gradient(135deg,#b8b8c6 50%,#fff 50%)"></div><div class="a" style="left:476px;top:2px;width:2px;height:2px;background:linear-gradient(135deg,#b8b8c6 50%,#fff 50%)"></div><div class="a" style="left:480px;top:2px;width:2px;height:2px;background:linear-gradient(135deg,#b8b8c6 50%,#fff 50%)"></div><div class="a" style="left:484px;top:2px;width:2px;height:2px;background:linear-gradient(135deg,#b8b8c6 50%,#fff 50%)"></div><div class="a" style="left:468px;top:6px;width:2px;height:2px;background:linear-gradient(135deg,#b8b8c6 50%,#fff 50%)"></div><div class="a" style="left:472px;top:6px;width:2px;height:2px;background:linear-gradient(135deg,#b8b8c6 50%,#fff 50%)"></div><div class="a" style="left:476px;top:6px;width:2px;height:2px;background:linear-gradient(135deg,#b8b8c6 50%,#fff 50%)"></div><div class="a" style="left:480px;top:6px;width:2px;height:2px;background:linear-gradient(135deg,#b8b8c6 50%,#fff 50%)"></div><div class="a" style="left:484px;top:6px;width:2px;height:2px;background:linear-gradient(135deg,#b8b8c6 50%,#fff 50%)"></div><div class="a" style="left:468px;top:10px;width:2px;height:2px;background:linear-gradient(135deg,#b8b8c6 50%,#fff 50%)"></div><div class="a" style="left:472px;top:10px;width:2px;height:2px;background:linear-gradient(135deg,#b8b8c6 50%,#fff 50%)"></div><div class="a" style="left:476px;top:10px;width:2px;height:2px;background:linear-gradient(135deg,#b8b8c6 50%,#fff 50%)"></div><div class="a" style="left:480px;top:10px;width:2px;height:2px;background:linear-gradient(135deg,#b8b8c6 50%,#fff 50%)"></div><div class="a" style="left:484px;top:10px;width:2px;height:2px;background:linear-gradient(135deg,#b8b8c6 50%,#fff 50%)"></div></div><div class="sb" style="left:974px;top:649px;width:16px;height:16px"><div class="a" style="left:4px;top:3px;width:0;height:0;border-top:4px solid transparent;border-bottom:4px solid transparent;border-right:4px solid #000"></div></div><div class="sb" style="left:990px;top:649px;width:16px;height:16px"><div class="a" style="left:6px;top:3px;width:0;height:0;border-top:4px solid transparent;border-bottom:4px solid transparent;border-left:4px solid #000"></div></div>
<div class="gd" style="left:2px;top:671px"></div><div class="gd" style="left:5px;top:674px"></div><div class="gd" style="left:2px;top:677px"></div><div class="gd" style="left:5px;top:680px"></div><div class="gd" style="left:2px;top:683px"></div><div class="gd" style="left:5px;top:686px"></div><div class="gd" style="left:2px;top:689px"></div><div class="gd" style="left:5px;top:692px"></div>
<div class="sep" style="left:65px;top:675px;height:15px"></div><div class="sep" style="left:123px;top:675px;height:15px"></div><div class="sep" style="left:206px;top:675px;height:15px"></div><div class="sep" style="left:264px;top:675px;height:15px"></div><div class="sep" style="left:333px;top:675px;height:15px"></div><div class="sep" style="left:377px;top:675px;height:15px"></div><svg class="a" style="left:21px;top:675px" width="10" height="14" viewBox="0 0 10 14"><path d="M.7.9v10.200l2.500-2.300 1.800 4 1.600-.7-1.800-3.900h3.300z" fill="#fff" stroke="#000" stroke-width="1.100" stroke-linejoin="round"/></svg>
<svg class="a" style="left:41px;top:674px" width="17" height="17" viewBox="0 0 17 17"><rect x=".5" y=".5" width="15" height="10" rx="2" fill="#fafafa" stroke="#9a9a9a"/><g fill="#f2d4b4" stroke="#1c1c1c" stroke-width=".75" stroke-linejoin="round"><path d="M4 13L1.800 9.300q.2-1.300 1.500-.8L4.500 10z"/><rect x="4.300" y="2.500" width="2" height="8" rx="1"/><rect x="6.300" y="1.800" width="2" height="8" rx="1"/><rect x="8.300" y="2.500" width="2" height="8" rx="1"/><rect x="10.300" y="4" width="1.900" height="7" rx=".95"/><path d="M4.300 8.500h7.900V12q0 3.800-4 3.800T3.800 12z" stroke="none"/><path d="M4.300 9.500V12q-.2 3.800 3.900 3.800T12.200 12V9.500" fill="none"/></g></svg>
<svg class="a" style="left:74px;top:674px" width="17" height="16" viewBox="0 0 17 16"><path d="M0 0h16v16l-5-5H0z" fill="#acacb8"/></svg>
<svg class="a" style="left:99px;top:674px" width="17" height="16" viewBox="0 0 17 16"><path d="M0 0h16v16l-2-1H0z" fill="#acacb8"/></svg>
<svg class="a" style="left:132px;top:674px" width="16" height="16" viewBox="0 0 16 16"><path d="M0 0h16v15H11l-1 1-1-1H0z" fill="#acacb8"/></svg>
<svg class="a" style="left:157px;top:675px" width="16" height="14" viewBox="0 0 16 14"><path d="M0 0h16v13H0z" fill="#acacb8"/><rect x="13" y="10" width="1" height="1" fill="#fff"/></svg>
<svg class="a" style="left:183px;top:675px" width="16" height="15" viewBox="0 0 16 15"><path d="M0 0h10v3.500a5.500 5.500 0 1 1-5 8l-1-2.500H0z" fill="#acacb8"/></svg>
<svg class="a" style="left:215px;top:674px" width="16" height="16" viewBox="0 0 16 16"><path d="M0 5l3-5h3v5l5-5h5v16H0z" fill="#acacb8"/></svg>
<svg class="a" style="left:240px;top:674px" width="16" height="16" viewBox="0 0 16 16"><path d="M0 0h16v13h-2l1 3h-3l-3-6h-9z" fill="#acacb8"/><path d="M1 7h9" stroke="#efeff7"/></svg>
<svg class="a" style="left:273px;top:675px" width="17" height="14" viewBox="0 0 17 14"><rect x="1" y="1" width="12" height="9" fill="none" stroke="#acacb8" stroke-width="1.400"/><path d="M0 12.500h15M15.500 0v12" stroke="#acacb8" stroke-dasharray="1 1.500"/></svg>
<svg class="a" style="left:297px;top:674px" width="17" height="16" viewBox="0 0 17 16"><circle cx="8" cy="2.800" r="2.200" fill="none" stroke="#acacb8" stroke-width="1.800"/><path d="M8 4.500v10M3.500 6.800h9" stroke="#acacb8" stroke-width="2.800"/><path d="M0 8q0 8 8 8t8-8l-3.500 1.500q-.3 3-4.500 3t-4.500-3z" fill="#acacb8"/></svg>
<div class="dd g" style="left:320px;top:680px"></div><svg class="a" style="left:342px;top:675px" width="16" height="14" viewBox="0 0 16 14"><rect x="0" y="0" width="2" height="14" fill="#acacb8"/><rect x="3.500" y="1" width="12" height="5" fill="#acacb8"/><rect x="3.500" y="7.500" width="7.500" height="4.500" fill="#acacb8"/></svg>
<div class="dd g" style="left:364px;top:680px"></div>
<div class="a" style="left:388px;top:676.0px;width:1px;height:1px;background:#555"></div><div class="a" style="left:393px;top:676.0px;width:1px;height:1px;background:#555"></div><div class="a" style="left:398px;top:676.0px;width:1px;height:1px;background:#555"></div><div class="a" style="left:388px;top:679.5px;width:1px;height:1px;background:#555"></div><div class="a" style="left:393px;top:679.5px;width:1px;height:1px;background:#555"></div><div class="a" style="left:398px;top:679.5px;width:1px;height:1px;background:#555"></div><div class="a" style="left:388px;top:683.0px;width:1px;height:1px;background:#555"></div><div class="a" style="left:393px;top:683.0px;width:1px;height:1px;background:#555"></div><div class="a" style="left:398px;top:683.0px;width:1px;height:1px;background:#555"></div><div class="a" style="left:388px;top:686.5px;width:1px;height:1px;background:#555"></div><div class="a" style="left:393px;top:686.5px;width:1px;height:1px;background:#555"></div><div class="a" style="left:398px;top:686.5px;width:1px;height:1px;background:#555"></div><svg class="a" style="left:412px;top:675px" width="15" height="14" viewBox="0 0 15 14"><path d="M1 1.200h7.500a5.400 5.400 0 0 1 0 10.800H1V8.500h7a2 2 0 0 0 0-4H1z" fill="#e02010" stroke="#1a1a1a" stroke-width="1" stroke-linejoin="round"/><path d="M1 1.200h3.200v3.300H1zM1 8.500h3.200V12H1z" fill="#f4f4f4" stroke="#1a1a1a" stroke-width="1"/><path d="M8 2.500q3.500 0 4 3" fill="none" stroke="#f8b030" stroke-width="1"/></svg>
<svg class="a" style="left:436px;top:674px" width="17" height="17" viewBox="0 0 17 17"><rect x="3.500" y="3.500" width="9" height="7" fill="#fff" stroke="#8a8a8a" stroke-width="1.400"/><path d="M3.500 0v16M12.500 0v16M0 3.500h17M0 10.500h17" stroke="#4a8ac8" stroke-width="1" stroke-dasharray="1 1.200"/></svg>
<div class="a" style="left:463px;top:670px;width:10px;height:25px;background:linear-gradient(#e4e4ee,#bfbfcd)"><div class="dds" style="left:2px;top:18px"></div></div>
<div class="sf" style="left:5px;width:276px"><div class="t" style="left:5px;top:4px;font-size:14px;letter-spacing:0.12px">Страница  2 / 8</div></div><div class="sf" style="left:285px;width:232px"><div class="t" style="left:5px;top:4px;font-size:14px;letter-spacing:0px">Обычный</div></div><div class="sf" style="left:521px;width:45px"><div class="t" style="left:-0.5px;top:4px;font-size:14px;letter-spacing:0.4px">100%</div></div><div class="sf" style="left:570px;width:46px"><div class="t" style="left:7px;top:4px;font-size:14px;letter-spacing:0.9px">ВСТ</div></div><div class="sf" style="left:621px;width:59px"><div class="t" style="left:3.7px;top:4px;font-size:14px;letter-spacing:0.2px">СТАНД</div></div><div class="sf" style="left:684px;width:19px"><div class="t" style="left:3.6px;top:4px;font-size:14px;letter-spacing:0px">*</div></div><div class="sf" style="left:707px;width:26px"><div class="t" style="left:6px;top:4px;font-size:14px;letter-spacing:0px"></div></div><div class="sf" style="left:737px;width:282px"><div class="t" style="text-align:center;left:0;width:100%;top:4px;font-size:14px;letter-spacing:0px">Уровень  1</div></div>
</div></body></html>
